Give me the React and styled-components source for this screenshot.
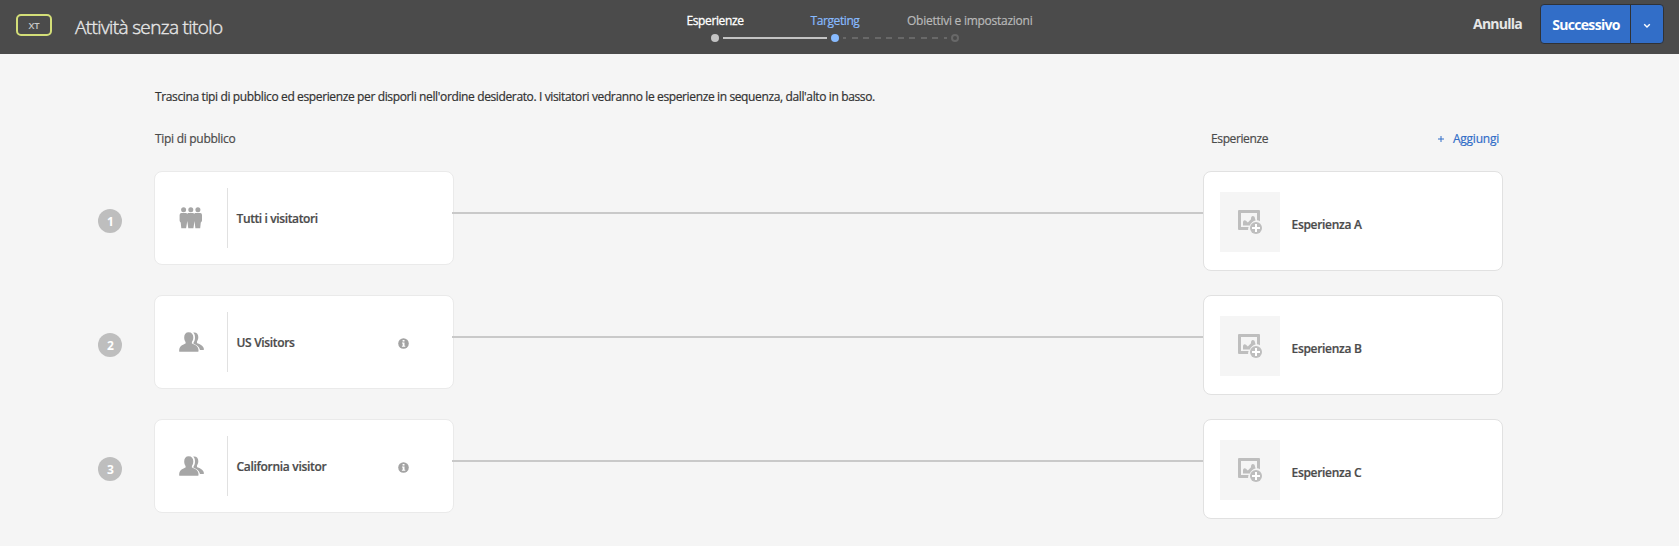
import React from 'react';
import styled, { createGlobalStyle } from 'styled-components';

const GlobalStyle = createGlobalStyle`
  * { box-sizing: border-box; }
  body {
    margin: 0;
    background: #f5f5f5;
    color: #4b4b4b;
    font: 400 12px/16px "Open Sans", "Noto Sans", sans-serif;
  }
  button { font: inherit; border: 0; padding: 0; background: none; cursor: pointer; }
`;

const Page = styled.div`
  min-height: 546px;
  overflow: hidden;
  background: #f5f5f5;
`;

const Text = styled.span`
  white-space: nowrap;
  letter-spacing: ${(p) => p.$track || 0}px;
  -webkit-text-stroke: 0.2px currentColor;
`;

/* Header */
const Header = styled.header`
  display: flex;
  height: 54px;
  background: #4b4b4b;
`;

const Brand = styled.div`
  display: flex;
  align-items: flex-start;
  width: 655px;
  padding-left: 16px;
`;

const TypeBadge = styled.span`
  display: flex;
  align-items: center;
  justify-content: center;
  width: 36px;
  height: 22px;
  margin-top: 14px;
  padding-top: 1px;
  border: 2px solid #d3de78;
  border-radius: 5px;
  color: #c8c8c8;
  font-size: 9.5px;
  font-weight: 600;
  letter-spacing: -0.2px;
  line-height: 14px;
`;

const Title = styled.h1`
  margin: 15px 0 0 23px;
  color: #e6e6e6;
  font-size: 19px;
  font-weight: 300;
  line-height: 24px;
  letter-spacing: -0.63px;
  white-space: nowrap;
  -webkit-text-stroke: 0.4px #e6e6e6;
`;

const Stepper = styled.nav`
  width: 380px;
  padding-top: 13px;
`;

const StepLabels = styled.div`
  display: grid;
  grid-template-columns: 120px 120px 137px;
  height: 16px;
`;

const StepLabel = styled(Text)`
  text-align: ${(p) => (p.$align || 'center')};
  padding-left: ${(p) => (p.$align === 'left' ? 12 : 0)}px;
  color: ${(p) => p.$color};
  -webkit-text-stroke: ${(p) => (p.$strong ? 0.3 : 0.2)}px currentColor;
`;

const Track = styled.div`
  display: flex;
  align-items: center;
  gap: 4px;
  height: 8px;
  margin-top: 5px;
  padding-left: 56px;
`;

const Dot = styled.i`
  width: 8px;
  height: 8px;
  border-radius: 50%;
  background: ${(p) => p.$fill || 'transparent'};
  border: ${(p) => (p.$ring ? `2px solid ${p.$ring}` : '0')};
`;

const TrackLine = styled.i`
  width: 104px;
  height: 2px;
  background: ${(p) =>
    p.$dashed
      ? 'repeating-linear-gradient(90deg, #686868 0 3px, transparent 3px 8.6px, #686868 8.6px 11.55px)'
      : '#c3c3c3'};
`;

const Actions = styled.div`
  display: flex;
  align-items: flex-start;
  margin-left: auto;
  padding: 4px 15px 0 0;
`;

const CancelButton = styled.button`
  width: 49px;
  margin: 10px 18px 0 0;
  color: #e6e6e6;
  font-size: 14px;
  font-weight: 700;
  line-height: 20px;
  letter-spacing: -0.75px;
`;

const SplitButton = styled.div`
  display: flex;
  width: 124px;
  height: 40px;
  border: 1px solid #303236;
  border-radius: 4px;
  background: #326ec8;
  overflow: hidden;
`;

const NextButton = styled.button`
  width: 90px;
  padding: 2px 0 0 1px;
  border-right: 1px solid #303236;
  color: #fff;
  font-size: 14px;
  font-weight: 700;
  letter-spacing: -0.68px;
`;

const MenuButton = styled.button`
  display: flex;
  flex: 1;
  align-items: center;
  justify-content: center;
  padding: 3px 0 0 0;
`;

/* Body */
const Content = styled.main`
  width: 1503px;
  padding: 35px 0 0 98px;
`;

const Intro = styled.p`
  margin: 0 0 26px 57px;
  color: #323232;
  white-space: nowrap;
  letter-spacing: -0.37px;
  -webkit-text-stroke: 0.2px currentColor;
`;

const Headings = styled.div`
  display: flex;
  height: 16px;
  margin: 0 0 24px 57px;
`;

const ExperienceHeading = styled.div`
  display: flex;
  justify-content: space-between;
  width: 292px;
  margin-left: auto;
  padding-right: 4px;
`;

const AddLink = styled.button`
  display: flex;
  align-items: center;
  gap: 9px;
  color: #326ec8;
`;

const Rows = styled.div`
  display: flex;
  flex-direction: column;
  gap: 24px;
`;

const Row = styled.div`
  display: flex;
  align-items: flex-start;
  height: 100px;
`;

const RowNumber = styled.span`
  display: flex;
  align-items: center;
  justify-content: center;
  width: 24px;
  height: 24px;
  margin: 38px 32px 0 0;
  padding-left: 1px;
  padding-top: 1px;
  border-radius: 50%;
  background: #bebebe;
  color: #fff;
  font-weight: 700;
`;

const Card = styled.div`
  display: flex;
  align-items: center;
  width: 300px;
  background: #fff;
  border-radius: 8px;
`;

const AudienceCard = styled(Card)`
  height: 94px;
  border: 1px solid #eaeaea;
`;

const ExperienceCard = styled(Card)`
  height: 100px;
  padding: 2px 0 0 16px;
  border: 1px solid #e1e1e1;
`;

const AudienceIcon = styled.div`
  display: flex;
  align-items: center;
  justify-content: center;
  width: 73px;
  height: 60px;
  border-right: 1px solid #e1e1e1;
`;

const CardName = styled(Text)`
  flex: 1;
  margin-left: ${(p) => p.$gap}px;
  padding-top: ${(p) => p.$drop}px;
  font-weight: 600;
`;

const InfoIcon = styled.svg`
  display: block;
  margin: 3px 44px 0 0;
`;

const Connector = styled.div`
  flex: 1;
  height: 2px;
  margin: 41px 0 0 -2px;
  background: #c9c9c9;
`;

const Thumb = styled.div`
  display: flex;
  align-items: center;
  justify-content: center;
  width: 60px;
  height: 60px;
  background: #f5f5f5;
`;

const Everyone = () => (
  <svg width="24" height="22" viewBox="0 0 24 22" fill="#a6a6a6">
    <circle cx="4.6" cy="2.8" r="2.5" />
    <circle cx="11.8" cy="2.8" r="2.5" />
    <circle cx="18.9" cy="2.8" r="2.5" />
    <path d="M2.400 6h4.800l1 .7 1-.7h5l1 .7 1-.7h5Q23 6.200 23 8v5.500q-.3 1.600-1.200 2l-.6 5.800h-4.800L15.500 14l-1.100 7.300H9.300L8.300 14 7.100 21.300H2.300l-.6-5.700Q.8 15 .6 13.400V8Q.8 6.200 2.400 6z" />
  </svg>
);

const Group = () => (
  <svg width="25" height="20" viewBox="0 0 25 20" fill="#a6a6a6">
    <path d="M9.7.3c3 0 4.6 2 4.6 5 0 2.1-.6 3.6-1.4 4.7v1.600c1.6.9 6.200 1.800 6.600 6.200q.1 1.800-.3 2H.4q-.4-.2-.2-2c.5-4.400 4.900-5.300 6.400-6.200V10C5.700 8.900 5.200 7.400 5.200 5.300c0-3 1.500-5 4.500-5z" />
    <path d="M14.200.5c3.400-.5 5.100 1.600 5.100 4.600 0 2-.6 3.300-1.300 4.300v1.500c1.700 1 6.700 2.200 6.900 6.200q0 .9-.4 1H21c-.7-3.400-3.400-5.100-6.500-6.300v-1.400c1-1.400 1.500-3 1.500-5 0-2.100-.6-3.800-1.800-4.900z" />
  </svg>
);

const Info = () => (
  <InfoIcon width="11" height="11" viewBox="0 0 11 11">
    <circle cx="5.500" cy="5.500" r="5.300" fill="#a3a3a3" />
    <path d="M4.600 1.900h1.900v1.600H4.600zM4 4.500h2.500v3.200h.8v1.100H3.900V7.700h.8V5.600H4z" fill="#fff" />
  </InfoIcon>
);

const AddImage = () => (
  <svg width="24" height="24" viewBox="0 0 24 24" fill="#bebebe">
    <path d="M1 0h20q1 0 1 1v10.200a8 8 0 0 0-3-.9V3H3v14h7.600q-.6 1.500-.5 3H1q-1 0-1-1V1q0-1 1-1z" />
    <path d="M5 15.400v-3.700q1.300-2.300 3-.9l1.800 1.700 3.200-3.200q-.3-3.100 2-3.300 2.100.2 2 2.500l.6 1.900q-3.800.8-5.800 5z" />
    <circle cx="18" cy="18" r="6" />
    <path d="M17 14h2v3h3v2h-3v3h-2v-3h-3v-2h3z" fill="#fff" />
  </svg>
);

const rows = [
  { audience: 'Tutti i visitatori', track: -0.38, everyone: true, experience: 'Esperienza A' },
  { audience: 'US Visitors', track: -0.33, experience: 'Esperienza B' },
  { audience: 'California visitor', track: -0.3, experience: 'Esperienza C' },
];

export default function App() {
  return (
    <Page>
      <GlobalStyle />
      <Header>
        <Brand>
          <TypeBadge>XT</TypeBadge>
          <Title>Attività senza titolo</Title>
        </Brand>
        <Stepper>
          <StepLabels>
            <StepLabel $color="#fff" $track={-0.38} $strong>Esperienze</StepLabel>
            <StepLabel $color="#88bbff" $track={-0.42}>Targeting</StepLabel>
            <StepLabel $color="#b9b9b9" $track={-0.26} $align="left">Obiettivi e impostazioni</StepLabel>
          </StepLabels>
          <Track>
            <Dot $fill="#c3c3c3" />
            <TrackLine />
            <Dot $fill="#88bbff" />
            <TrackLine $dashed />
            <Dot $ring="#686868" />
          </Track>
        </Stepper>
        <Actions>
          <CancelButton>Annulla</CancelButton>
          <SplitButton>
            <NextButton>Successivo</NextButton>
            <MenuButton aria-label="Altre opzioni">
              <svg width="8" height="6" viewBox="0 0 8 6" fill="none" stroke="#fff" strokeWidth="1.4">
                <path d="M1.200 1.200 4 4l2.800-2.800" />
              </svg>
            </MenuButton>
          </SplitButton>
        </Actions>
      </Header>
      <Content>
        <Intro>
          Trascina tipi di pubblico ed esperienze per disporli nell'ordine desiderato. I visitatori vedranno le
          esperienze in sequenza, dall'alto in basso.
        </Intro>
        <Headings>
          <Text $track={-0.29}>Tipi di pubblico</Text>
          <ExperienceHeading>
            <Text $track={-0.38}>Esperienze</Text>
            <AddLink>
              <svg width="6" height="6" viewBox="0 0 6 6" stroke="#326ec8"><path d="M0 3h6M3 0v6" /></svg>
              <Text $track={-0.23}>Aggiungi</Text>
            </AddLink>
          </ExperienceHeading>
        </Headings>
        <Rows>
          {rows.map((row, i) => (
            <Row key={row.audience}>
              <RowNumber>{i + 1}</RowNumber>
              <AudienceCard>
                <AudienceIcon>{row.everyone ? <Everyone /> : <Group />}</AudienceIcon>
                <CardName $gap={8.5} $drop={2} $track={row.track}>{row.audience}</CardName>
                {!row.everyone && <Info />}
              </AudienceCard>
              <Connector />
              <ExperienceCard>
                <Thumb><AddImage /></Thumb>
                <CardName $gap={11.5} $drop={6} $track={-0.31}>{row.experience}</CardName>
              </ExperienceCard>
            </Row>
          ))}
        </Rows>
      </Content>
    </Page>
  );
}
